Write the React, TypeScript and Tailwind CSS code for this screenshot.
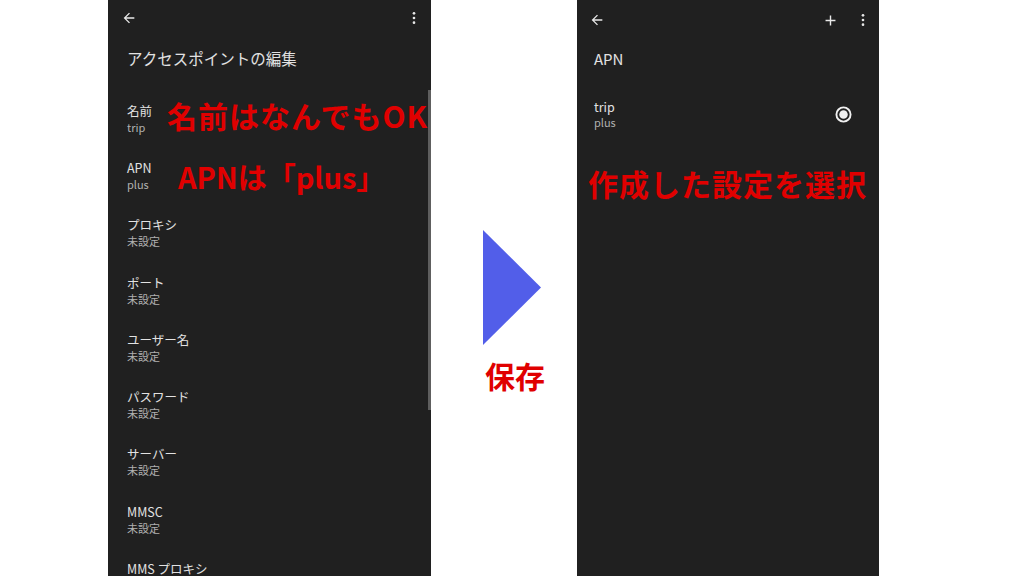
const FONT = { fontFamily: '"Noto Sans CJK JP", "Noto Sans", sans-serif' };

const ITEMS: [string, string][] = [
  ["名前", "trip"],
  ["APN", "plus"],
  ["プロキシ", "未設定"],
  ["ポート", "未設定"],
  ["ユーザー名", "未設定"],
  ["パスワード", "未設定"],
  ["サーバー", "未設定"],
  ["MMSC", "未設定"],
  ["MMS プロキシ", "未設定"],
];

function BackIcon() {
  return (
    <svg width="16" height="16" viewBox="0 0 24 24" className="fill-[#e8e8e8]">
      <path d="M20 11H7.83l5.59-5.59L12 4l-8 8 8 8 1.41-1.41L7.83 13H20v-2z" />
    </svg>
  );
}

function MoreIcon() {
  return (
    <svg width="16" height="16" viewBox="0 0 24 24" className="fill-[#e8e8e8]">
      <circle cx="12" cy="5" r="2" />
      <circle cx="12" cy="12" r="2" />
      <circle cx="12" cy="19" r="2" />
    </svg>
  );
}

function PlusIcon() {
  return (
    <svg width="17" height="17" viewBox="0 0 24 24" className="fill-[#e8e8e8]">
      <path d="M19 13h-6v6h-2v-6H5v-2h6V5h2v6h6v2z" />
    </svg>
  );
}

function Note({ children, className }: { children: React.ReactNode; className: string }) {
  return (
    <div className={`absolute whitespace-nowrap font-bold leading-none text-[#e00000] ${className}`}>
      {children}
    </div>
  );
}

export default function App() {
  return (
    <div className="flex h-[576px] w-[1024px] overflow-hidden bg-white pl-[108px]" style={FONT}>
      {/* Edit screen */}
      <div className="relative h-full w-[323px] bg-[#202020]">
        <div className="flex h-[35px] items-center justify-between pl-[13px] pr-[9px]">
          <BackIcon />
          <MoreIcon />
        </div>
        <div className="h-[55px] pl-[19px] pt-[11px] text-[15.5px] leading-6 text-[#e2e2e2]">
          アクセスポイントの編集
        </div>
        <div>
          {ITEMS.map(([label, value]) => (
            <div key={label} className="flex h-[57.3px] flex-col justify-center pl-[19px]">
              <div className="text-[12.5px] leading-4 text-[#e2e2e2]">{label}</div>
              <div className="text-[11px] leading-4 text-[#b0b0b0]">{value}</div>
            </div>
          ))}
        </div>
        <div className="absolute right-0 top-[90px] h-[320px] w-[3px] bg-[#5e5e5e]" />
        <Note className="left-[59px] top-[100px] text-[30px] tracking-[1px]">名前はなんでもOK</Note>
        <Note className="left-[70px] top-[162px] text-[29px]">APNは「plus」</Note>
      </div>

      {/* Arrow */}
      <div className="flex w-[146px] flex-col pl-[52px] pt-[230px]">
        <svg width="58" height="115" viewBox="0 0 58 115">
          <polygon points="0,0 58,57.5 0,115" fill="#525ee9" />
        </svg>
        <div className="mt-[15px] pl-[2px] text-[30px] font-bold leading-none text-[#e00000]">保存</div>
      </div>

      {/* APN list */}
      <div className="relative h-full w-[302px] bg-[#202020]">
        <div className="flex h-[40px] items-center pl-[12px] pr-[8px]">
          <BackIcon />
          <div className="ml-auto mr-[16px]">
            <PlusIcon />
          </div>
          <MoreIcon />
        </div>
        <div className="pl-[17px] pt-[7px] text-[15px] leading-6 text-[#e2e2e2]">APN</div>
        <div className="flex items-center pl-[17px] pr-[27px] pt-[29px]">
          <div className="flex flex-col gap-[1px]">
            <div className="text-[12.5px] leading-[14px] text-[#e2e2e2]">trip</div>
            <div className="text-[11px] leading-[14px] text-[#b0b0b0]">plus</div>
          </div>
          <svg width="17" height="17" viewBox="0 0 18 18" className="ml-auto">
            <circle cx="9" cy="9" r="7.5" fill="none" stroke="#f0f0f0" strokeWidth="2" />
            <circle cx="9" cy="9" r="4.5" fill="#f0f0f0" />
          </svg>
        </div>
        <Note className="left-[11px] top-[168px] text-[30px] tracking-[1px]">作成した設定を選択</Note>
      </div>
    </div>
  );
}
